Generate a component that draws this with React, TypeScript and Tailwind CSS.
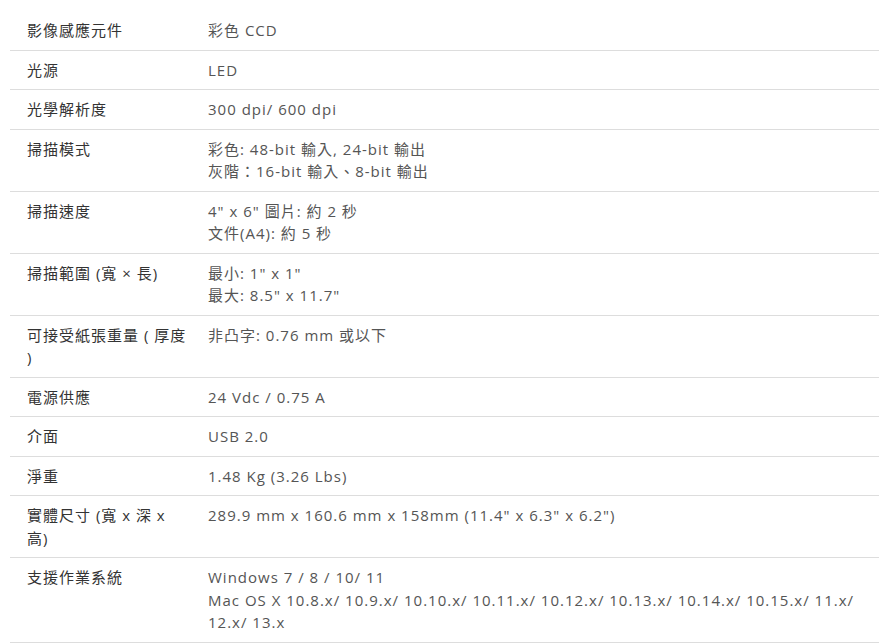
const specs: { label: string; value: string[] }[] = [
  { label: "影像感應元件", value: ["彩色 CCD"] },
  { label: "光源", value: ["LED"] },
  { label: "光學解析度", value: ["300 dpi/ 600 dpi"] },
  { label: "掃描模式", value: ["彩色: 48-bit 輸入, 24-bit 輸出", "灰階：16-bit 輸入、8-bit 輸出"] },
  { label: "掃描速度", value: ['4" x 6" 圖片: 約 2 秒', "文件(A4): 約 5 秒"] },
  { label: "掃描範圍 (寬 × 長)", value: ['最小: 1" x 1"', '最大: 8.5" x 11.7"'] },
  { label: "可接受紙張重量 ( 厚度 )", value: ["非凸字: 0.76 mm 或以下"] },
  { label: "電源供應", value: ["24 Vdc / 0.75 A"] },
  { label: "介面", value: ["USB 2.0"] },
  { label: "淨重", value: ["1.48 Kg (3.26 Lbs)"] },
  { label: "實體尺寸 (寬 x 深 x 高)", value: ['289.9 mm x 160.6 mm x 158mm (11.4" x 6.3" x 6.2")'] },
  {
    label: "支援作業系統",
    value: [
      "Windows 7 / 8 / 10/ 11",
      "Mac OS X 10.8.x/ 10.9.x/ 10.10.x/ 10.11.x/ 10.12.x/ 10.13.x/ 10.14.x/ 10.15.x/ 11.x/ 12.x/ 13.x",
    ],
  },
];

export default function App() {
  return (
    <div className="min-h-[643px] w-[888px] bg-white pl-[10px] pr-[9px] pt-[11px] font-['Open_Sans','Noto_Sans_CJK_TC',sans-serif] text-[15px] leading-[22.5px] tracking-[1px]">
      {specs.map((row) => (
        <div key={row.label} className="grid grid-cols-[198px_1fr] border-b border-[#dddddd]">
          <div className="py-2 pl-[17px] pr-[20px] text-[#333333]">{row.label}</div>
          <div className="py-2 pr-[16px] text-[#555555]">
            {row.value.map((line) => (
              <div key={line}>{line}</div>
            ))}
          </div>
        </div>
      ))}
    </div>
  );
}
